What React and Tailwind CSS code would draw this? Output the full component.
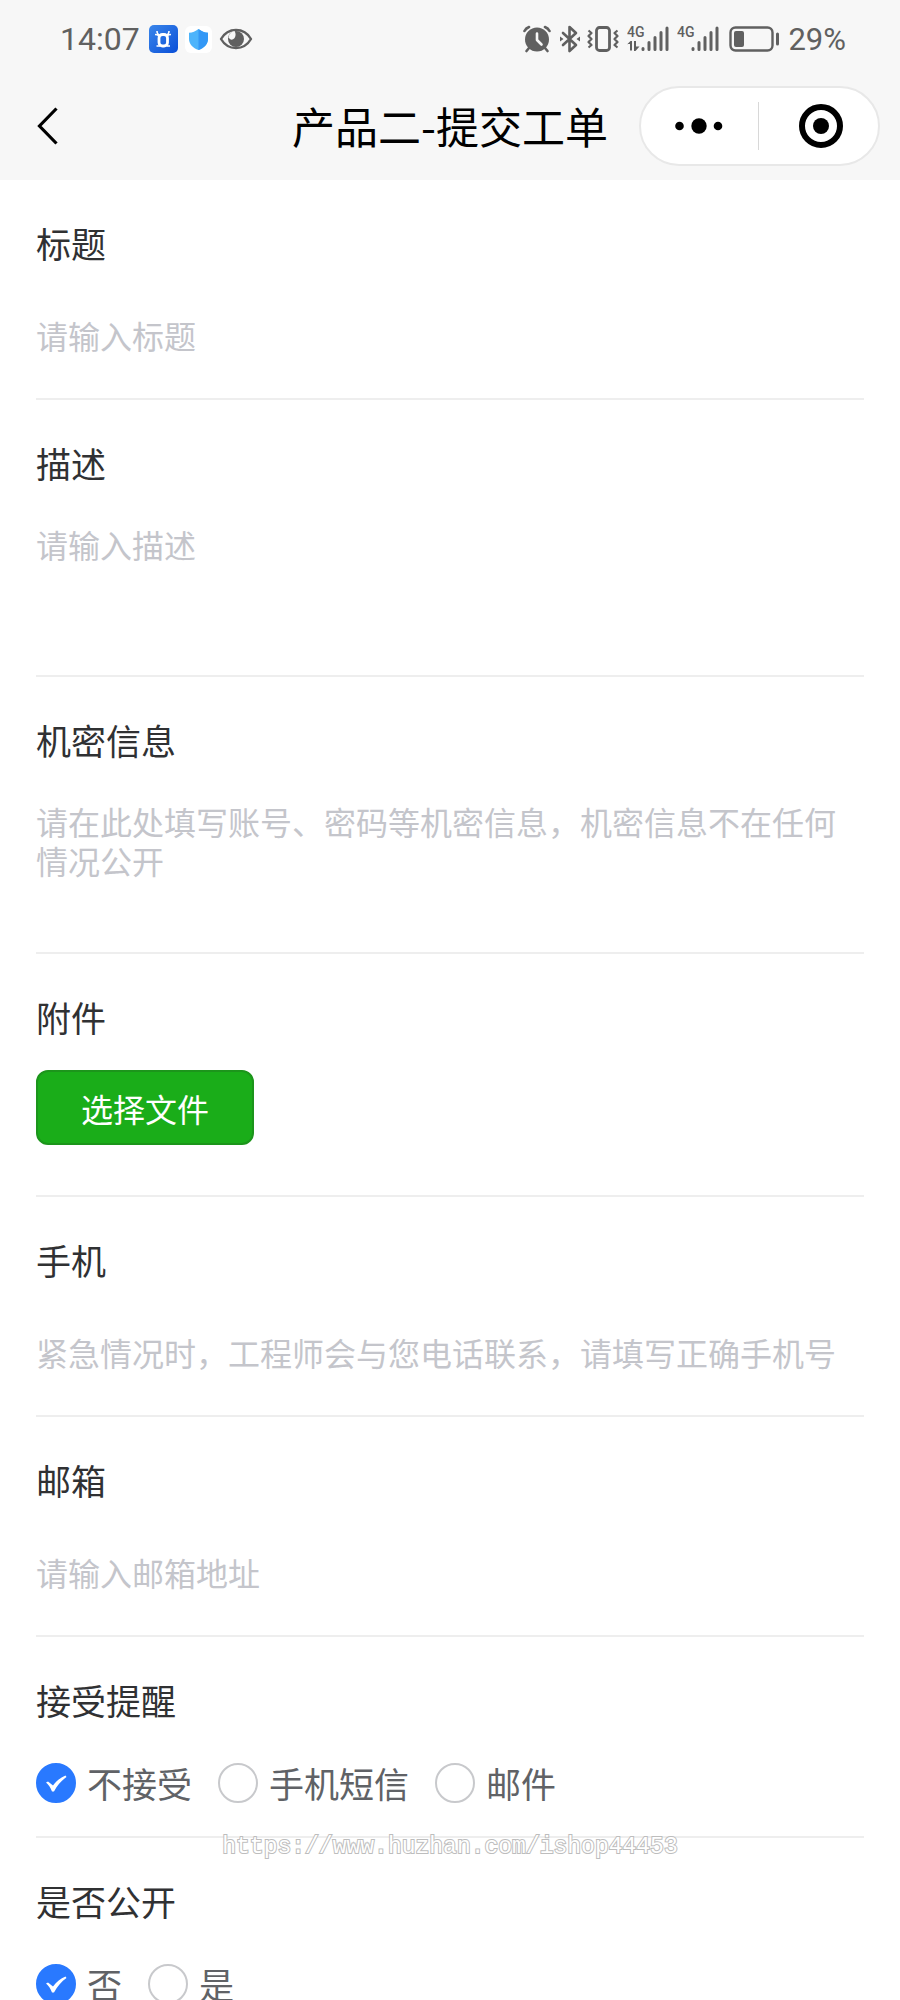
import { useState } from 'react';
import clsx from 'clsx';

const NOTICE_OPTIONS = [
  { id: 'none', name: '不接受' },
  { id: 'sms', name: '手机短信' },
  { id: 'email', name: '邮件' },
];

const PUBLIC_OPTIONS = [
  { id: 'no', name: '否' },
  { id: 'yes', name: '是' },
];

const SignalIcon = ({ withData }) => (
  <svg width="42" height="28" viewBox="0 0 42 28" fill="#606060" aria-hidden="true">
    <text x="0" y="12" fontSize="14" fontWeight="500" fontFamily="Roboto, sans-serif">4G</text>
    {withData && (
      <path d="M0 19.500 3.500 16H5v9.500H3V19H0zM7 16h2v5.500h3.500L8.500 26H7z" />
    )}
    <g stroke="#606060" strokeWidth="3" strokeLinecap="round">
      <path d="M16 24.500v-1M22 24.500v-7M28 24.500v-12M34 24.500v-17M40 24.500V3" />
    </g>
  </svg>
);

const StatusBar = () => (
  <div className="flex h-[78px] items-center justify-between pr-[54px] pl-[60px] font-['Roboto',sans-serif] text-[#606060]">
    <div className="flex items-center">
      <span className="text-[32px] leading-none">14:07</span>
      <svg className="ml-[9px]" width="29" height="28" viewBox="0 0 29 28" aria-hidden="true">
        <defs>
          <linearGradient id="app" x1="0" y1="0" x2="1" y2="1">
            <stop offset="0" stopColor="#3a86ea" />
            <stop offset="1" stopColor="#0a4fd8" />
          </linearGradient>
        </defs>
        <rect width="29" height="28" rx="5" fill="url(#app)" />
        <path d="M8 6c0 2.500 1 4 3.500 4.500M20 6c0 2.500-1 4-3.500 4.500M6 9.500c2 0 3 .500 4 1.500M22 9.500c-2 0-3 .500-4 1.500" stroke="#fff" strokeWidth="1.600" fill="none" />
        <rect x="10" y="9.500" width="8.500" height="11.500" rx="3.500" fill="none" stroke="#fff" strokeWidth="2.800" />
        <path d="M7.500 21h3.500M17.500 21H21" stroke="#fff" strokeWidth="1.500" />
      </svg>
      <svg className="ml-[7px]" width="27" height="27" viewBox="0 0 27 27" aria-hidden="true">
        <rect width="27" height="27" rx="6" fill="#fff" />
        <path d="M13.500 3c3 2.500 6 3.500 9.500 3.700V13c0 5-4 9-9.500 11C8 22 4 18 4 13V6.700C7.500 6.500 10.500 5.500 13.500 3z" fill="#4db4fb" />
        <path d="M13.500 3c3 2.500 6 3.500 9.500 3.700V13c0 5-4 9-9.500 11z" fill="#3398f6" />
      </svg>
      <svg className="ml-[7px]" width="34" height="24" viewBox="0 0 34 24" aria-hidden="true">
        <path d="M2 12C9 0 25 0 32 12 25 24 9 24 2 12z" fill="none" stroke="#606060" strokeWidth="2.400" strokeLinejoin="round" />
        <circle cx="17" cy="12" r="8" fill="#606060" />
        <path d="M10 8.500c1-2.500 3-4 5.500-4.500 2 3 1 7.500-2 8.500-1.500.500-3-.500-4-2z" fill="#f7f7f7" />
      </svg>
    </div>

    <div className="flex items-center">
      <svg width="28" height="28" viewBox="0 0 28 28" aria-hidden="true">
        <g stroke="#606060" strokeLinecap="round" fill="none">
          <path d="M1.500 6C2.500 4 4 2.800 6 2M26.500 6C25.500 4 24 2.800 22 2" strokeWidth="2.600" />
          <path d="M6 23l-2.500 3M22 23l2.500 3" strokeWidth="2.600" />
        </g>
        <circle cx="14" cy="14.500" r="12" fill="#606060" />
        <path d="M14 8.500v6.500l4.500 4.500" fill="none" stroke="#f7f7f7" strokeWidth="2.600" strokeLinecap="round" strokeLinejoin="round" />
      </svg>
      <svg className="ml-2" width="22" height="28" viewBox="0 0 22 28" aria-hidden="true">
        <path d="M4 8l13 12-6.500 6V2L17 8 4 20" fill="none" stroke="#606060" strokeWidth="2.600" strokeLinecap="round" strokeLinejoin="round" />
        <path d="M1 11.500 4.500 14 1 16.500zM21 11.500 17.500 14l3.500 2.500z" fill="#606060" />
      </svg>
      <svg className="ml-[6px]" width="32" height="28" viewBox="0 0 32 28" fill="none" stroke="#606060" aria-hidden="true">
        <rect x="9.500" y="2.500" width="13" height="23" rx="3" strokeWidth="2.800" />
        <path d="M1.500 5.500l3 2.500-3 3 3 3-3 3 3 3-3 2.500M30.500 5.500l-3 2.500 3 3-3 3 3 3-3 3 3 2.500" strokeWidth="2.200" strokeLinejoin="round" />
      </svg>
      <span className="ml-2">
        <SignalIcon withData />
      </span>
      <span className="ml-2">
        <SignalIcon />
      </span>
      <svg className="ml-[10px]" width="51" height="28" viewBox="0 0 51 28" fill="none" aria-hidden="true">
        <rect x="1.500" y="2.500" width="42" height="23" rx="5" stroke="#606060" strokeWidth="2.400" />
        <rect x="5" y="6" width="10" height="16" rx="2" fill="#606060" />
        <path d="M48.500 9v10" stroke="#606060" strokeWidth="3" strokeLinecap="round" />
      </svg>
      <span className="ml-2 text-[31px] leading-none">29%</span>
    </div>
  </div>
);

const NavBar = () => (
  <div className="grid h-[102px] grid-cols-[1fr_auto_1fr] items-center pb-[6px]">
    <button type="button" aria-label="返回" className="justify-self-start pl-9">
      <svg width="24" height="40" viewBox="0 0 24 40" fill="none" aria-hidden="true">
        <path d="M20.500 2.500 3.500 20l17 17.500" stroke="#000" strokeWidth="3.200" />
      </svg>
    </button>
    <h1 className="pb-[2px] text-[43px] leading-[60px] text-black">产品二-提交工单</h1>
    <div className="mr-5 flex h-20 w-[241px] items-center justify-self-end rounded-full border-2 border-[#e8e8e8] bg-white">
      <button type="button" aria-label="更多" className="flex w-[117px] justify-center pr-[2px]">
        <svg width="48" height="16" viewBox="0 0 48 16" aria-hidden="true">
          <circle cx="4.500" cy="8" r="4.300" />
          <circle cx="24" cy="8" r="7.700" />
          <circle cx="43" cy="8" r="4.300" />
        </svg>
      </button>
      <div className="h-12 w-px bg-[#d8d8d8]" />
      <button type="button" aria-label="关闭" className="flex flex-1 justify-center pl-1">
        <svg width="44" height="44" viewBox="0 0 44 44" aria-hidden="true">
          <circle cx="22" cy="22" r="19" fill="none" stroke="#000" strokeWidth="6" />
          <circle cx="22" cy="22" r="8" />
        </svg>
      </button>
    </div>
  </div>
);

const FIELD = 'block w-full bg-transparent text-[32px] text-[#303133] placeholder-[#c4c5cb] outline-none';

const FormItem = ({ label, htmlFor, className, children }) => (
  <div className={clsx('border-b-2 border-[#eeeeee] pt-10', className)}>
    <label htmlFor={htmlFor} className="block text-[35px] leading-[46px] text-[#303133]">
      {label}
    </label>
    {children}
  </div>
);

const TextItem = ({ id, label, type = 'text', placeholder }) => (
  <FormItem label={label} htmlFor={id} className="pb-7">
    <input id={id} type={type} placeholder={placeholder} className={`${FIELD} mt-[34px] h-[70px]`} />
  </FormItem>
);

const TextareaItem = ({ id, label, placeholder }) => (
  <FormItem label={label} htmlFor={id} className="pb-[26px]">
    <textarea
      id={id}
      placeholder={placeholder}
      className={`${FIELD} mt-[39px] h-[124px] resize-none leading-[39px]`}
    />
  </FormItem>
);

const RadioItem = ({ name, label, options, value, onChange }) => (
  <fieldset className="border-b-2 border-[#eeeeee] pt-10 pb-[33px]">
    <legend className="float-left w-full text-[35px] leading-[46px] text-[#303133]">{label}</legend>
    <div className="clear-both flex flex-wrap gap-[26px] pt-10">
      {options.map((option) => (
        <label key={option.id} className="flex items-center gap-[11px] text-[35px] leading-10 text-[#606266]">
          <span className="grid size-10 place-items-center">
            <input
              type="radio"
              name={name}
              checked={value === option.id}
              onChange={() => onChange(option.id)}
              className="col-start-1 row-start-1 size-10 appearance-none rounded-full border-2 border-[#c8c9cc] checked:border-[#2979ff] checked:bg-[#2979ff]"
            />
            {value === option.id && (
              <svg className="pointer-events-none col-start-1 row-start-1" width="40" height="40" viewBox="0 0 40 40" aria-hidden="true">
                <path d="M10 19.500 12 18.500 17 22.500C20.500 18 24.500 14.500 29.500 12.500L30.500 14C25.500 17.500 21.500 22 18 28.500H16C14.500 24.500 12.500 21.500 10 19.500z" fill="#fff" />
              </svg>
            )}
          </span>
          {option.name}
        </label>
      ))}
    </div>
  </fieldset>
);

const App = () => {
  const [notice, setNotice] = useState('none');
  const [isPublic, setIsPublic] = useState('no');

  return (
    <div
      lang="zh-CN"
      className="relative flex h-screen flex-col overflow-hidden bg-white font-['Noto_Sans_CJK_SC',sans-serif]"
    >
      <header className="shrink-0 bg-[#f7f7f7]">
        <StatusBar />
        <NavBar />
      </header>

      <main className="flex-1 overflow-y-auto px-9 [scrollbar-width:none]">
        <form>
          <TextItem id="title" label="标题" placeholder="请输入标题" />
          <TextareaItem id="desc" label="描述" placeholder="请输入描述" />
          <TextareaItem
            id="secret"
            label="机密信息"
            placeholder="请在此处填写账号、密码等机密信息，机密信息不在任何情况公开"
          />
          <FormItem label="附件" htmlFor="file" className="pb-[50px]">
            <button
              id="file"
              type="button"
              className="mt-[30px] h-[75px] rounded-xl border-2 border-[#1c951b] bg-[#1aad19] px-[43px] text-[32px] text-white"
            >
              选择文件
            </button>
          </FormItem>
          <TextItem
            id="phone"
            label="手机"
            type="tel"
            placeholder="紧急情况时，工程师会与您电话联系，请填写正确手机号"
          />
          <TextItem id="email" label="邮箱" type="email" placeholder="请输入邮箱地址" />
          <RadioItem name="notice" label="接受提醒" options={NOTICE_OPTIONS} value={notice} onChange={setNotice} />
          <RadioItem name="public" label="是否公开" options={PUBLIC_OPTIONS} value={isPublic} onChange={setIsPublic} />
        </form>
      </main>

      {/* Watermark */}
      <p className="pointer-events-none absolute inset-x-0 bottom-[139px] text-center font-['Liberation_Mono',monospace] text-[23px] leading-7 text-white [-webkit-text-stroke:2px_#bdbdbd] [paint-order:stroke_fill]">
        https://www.huzhan.com/ishop44453
      </p>
    </div>
  );
};

export default App;
